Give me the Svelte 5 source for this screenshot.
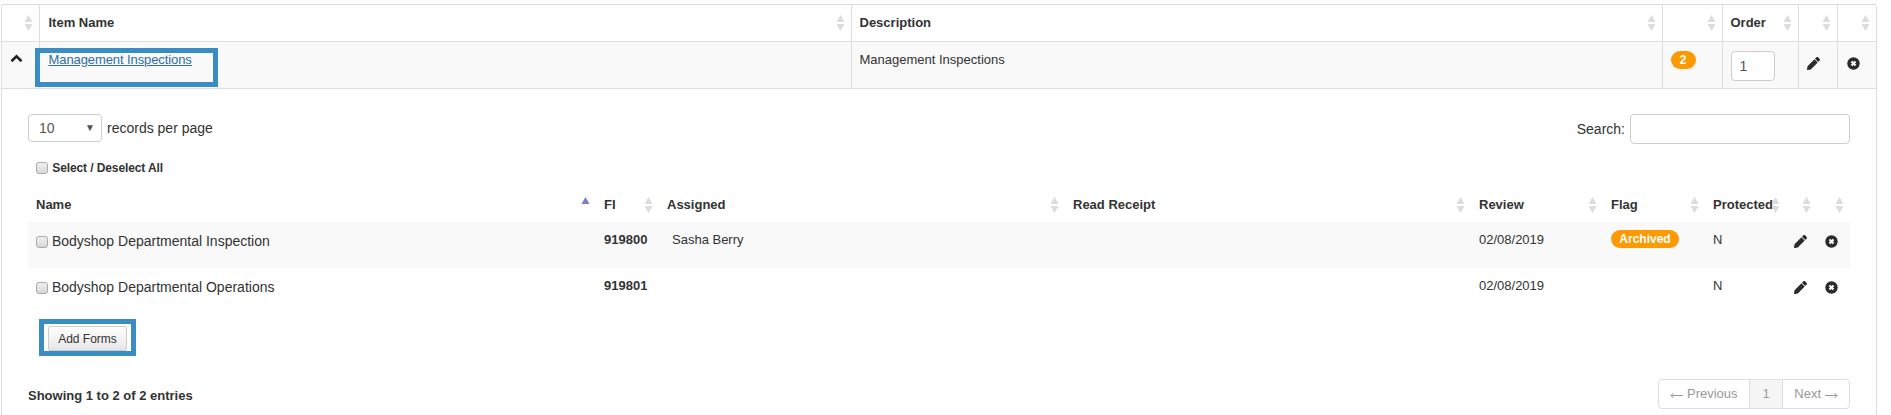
<script>
  const outerCols = [
    { label: '', width: 37 },
    { label: 'Item Name', width: 812 },
    { label: 'Description', width: 811 },
    { label: '', width: 60 },
    { label: 'Order', width: 76 },
    { label: '', width: 39 },
    { label: '', width: 39 }
  ];

  const innerCols = [
    { label: 'Name', width: 568, active: true },
    { label: 'FI', width: 63 },
    { label: 'Assigned', width: 406 },
    { label: 'Read Receipt', width: 406 },
    { label: 'Review', width: 132 },
    { label: 'Flag', width: 102 },
    { label: 'Protected', width: 81 },
    { label: '', width: 31 },
    { label: '', width: 33 }
  ];

  const forms = [
    { name: 'Bodyshop Departmental Inspection', fi: '919800', assigned: 'Sasha Berry', review: '02/08/2019', flag: 'Archived', prot: 'N' },
    { name: 'Bodyshop Departmental Operations', fi: '919801', assigned: '', review: '02/08/2019', flag: '', prot: 'N' }
  ];
</script>

{#snippet sortIcon(active)}
  <svg class="sort" width="9" height="18" viewBox="0 0 9 18">
    <path d="M4.5 1 L8.5 8 L0.5 8 Z" fill={active ? '#7b7bd6' : '#dcdcdc'} />
    {#if !active}
      <path d="M0.5 10 L8.5 10 L4.5 17 Z" fill="#dcdcdc" />
    {/if}
  </svg>
{/snippet}

{#snippet pencil()}
  <svg class="icon" width="13" height="13" viewBox="0 0 512 512">
    <path fill="#2b2b2b" d="M497.9 142.1l-46.1 46.1c-4.7 4.7-12.3 4.7-17 0l-111-111c-4.7-4.7-4.7-12.3 0-17l46.1-46.1c18.7-18.7 49.1-18.7 67.9 0l60.1 60.1c18.8 18.7 18.8 49.1 0 67.9zM284.2 99.8L21.6 362.4.4 483.9c-2.9 16.4 11.4 30.6 27.8 27.8l121.5-21.3 262.6-262.6c4.7-4.7 4.7-12.3 0-17l-111-111c-4.8-4.7-12.4-4.7-17.1 0z" />
  </svg>
{/snippet}

{#snippet removeIcon()}
  <svg class="icon" width="13" height="13" viewBox="0 0 13 13">
    <circle cx="6.5" cy="6.5" r="6.2" fill="#2b2b2b" />
    <path d="M4.5 4.5 L8.5 8.5 M8.5 4.5 L4.5 8.5" stroke="#fff" stroke-width="2.1" />
  </svg>
{/snippet}

{#snippet arrow(d)}
  <svg class="arrow" width="13" height="7" viewBox="0 0 13 7">
    <path {d} fill="none" stroke="#999" stroke-width="1" />
  </svg>
{/snippet}

<div class="panel">
  <table class="outer">
    <colgroup>
      {#each outerCols as col}
        <col style="width:{col.width}px" />
      {/each}
    </colgroup>
    <thead>
      <tr>
        {#each outerCols as col}
          <th>{col.label}{@render sortIcon(false)}</th>
        {/each}
      </tr>
    </thead>
    <tbody>
      <tr>
        <td class="toggle">
          <svg width="13" height="9" viewBox="0 0 13 9">
            <path d="M1.5 7.2 L6.5 2.4 L11.5 7.2" fill="none" stroke="#222" stroke-width="2.6" />
          </svg>
        </td>
        <td class="item">
          <a href="#top">Management Inspections</a>
          <span class="mark"></span>
        </td>
        <td>Management Inspections</td>
        <td><span class="badge count">2</span></td>
        <td><input class="order" value="1" /></td>
        <td class="action">{@render pencil()}</td>
        <td class="action">{@render removeIcon()}</td>
      </tr>
    </tbody>
  </table>

  <div class="detail">
    <div class="tools">
      <div class="length">
        <div class="select"><span>10</span><i>▼</i></div>
        records per page
      </div>
      <label class="search">Search: <input /></label>
    </div>

    <label class="select-all"><input type="checkbox" /> Select / Deselect All</label>

    <table class="inner">
      <colgroup>
        {#each innerCols as col}
          <col style="width:{col.width}px" />
        {/each}
      </colgroup>
      <thead>
        <tr>
          {#each innerCols as col}
            <th>{col.label}{@render sortIcon(col.active)}</th>
          {/each}
        </tr>
      </thead>
      <tbody>
        {#each forms as f}
          <tr>
            <td class="name"><input type="checkbox" /> {f.name}</td>
            <td class="fi">{f.fi}</td>
            <td class="assigned">{f.assigned}</td>
            <td></td>
            <td>{f.review}</td>
            <td>
              {#if f.flag}<span class="badge flag">{f.flag}</span>{/if}
            </td>
            <td>{f.prot}</td>
            <td class="action">{@render pencil()}</td>
            <td class="action">{@render removeIcon()}</td>
          </tr>
        {/each}
      </tbody>
    </table>

    <div class="add-mark"><button>Add Forms</button></div>

    <div class="footer">
      <div class="info">Showing 1 to 2 of 2 entries</div>
      <div class="pager">
        <span class="prev">{@render arrow('M13 3.5 H1 M3.5 1 L1 3.5 L3.5 6')} Previous</span>
        <span class="cur">1</span>
        <span class="next">Next {@render arrow('M0 3.5 H12 M9.5 1 L12 3.5 L9.5 6')}</span>
      </div>
    </div>
  </div>
</div>

<style>
  :global(body) {
    margin: 0;
    background: #fff;
    font-family: "Liberation Sans", Arial, sans-serif;
    font-size: 13px;
    line-height: 20px;
    color: #333;
  }

  .panel {
    box-sizing: border-box;
    width: 1876px;
    height: 411px;
    margin: 4px 0 0 1px;
    border-left: 1px solid #ddd;
    border-right: 1px solid #ddd;
    border-radius: 4px 4px 0 0;
  }

  table {
    table-layout: fixed;
    border-collapse: collapse;
  }

  th {
    position: relative;
    box-sizing: border-box;
    text-align: left;
    font-weight: bold;
    white-space: nowrap;
  }

  .sort {
    position: absolute;
    top: 50%;
    right: 6px;
    margin-top: -9px;
  }

  .outer {
    width: 1874px;
  }

  .outer th {
    height: 37px;
    padding: 0 8px;
    border: 1px solid #ddd;
    border-left-width: 0;
    border-bottom-width: 1px;
  }

  .outer th:nth-child(2) {
    padding-left: 9px;
  }

  .outer th:last-child,
  .outer td:last-child {
    border-right-width: 0;
  }

  .outer td {
    box-sizing: border-box;
    height: 47px;
    padding: 8px 8px 0;
    vertical-align: top;
    background: #f9f9f9;
    border-right: 1px solid #ddd;
    border-bottom: 1px solid #ddd;
  }

  .outer td.toggle {
    padding: 12px 0 0 8px;
    line-height: 0;
  }

  .outer td.item {
    position: relative;
    padding-left: 9px;
  }

  .item a {
    color: #2f6fa6;
    text-decoration: underline;
    letter-spacing: -0.09px;
  }

  .mark {
    position: absolute;
    left: -5px;
    top: 6px;
    box-sizing: border-box;
    width: 183px;
    height: 39px;
    border: 5px solid #3a8dc2;
  }

  .badge {
    display: inline-block;
    background: #ff9900;
    color: #fff;
    font-weight: bold;
    font-size: 12px;
    line-height: 18px;
    border-radius: 9px;
    text-align: center;
  }

  .count {
    width: 25px;
    margin-top: 1px;
  }

  .flag {
    width: 68px;
    vertical-align: top;
  }

  .order {
    box-sizing: border-box;
    display: block;
    width: 44px;
    height: 30px;
    margin: 1px 0 0 0;
    padding: 0 8px;
    border: 1px solid #ccc;
    border-radius: 4px;
    font: 14px "Liberation Sans", Arial, sans-serif;
    color: #555;
  }

  .outer td.action {
    padding: 15px 0 0 8px;
    line-height: 0;
  }

  .outer td.action:last-child {
    padding-left: 9px;
  }

  .detail {
    padding: 25px 26px 0 26px;
  }

  .tools {
    display: flex;
    justify-content: space-between;
    height: 30px;
    align-items: flex-start;
  }

  .length {
    display: flex;
    align-items: center;
    gap: 5px;
    font-size: 14px;
  }

  .select {
    box-sizing: border-box;
    display: flex;
    justify-content: space-between;
    align-items: center;
    width: 74px;
    height: 28px;
    padding: 0 6px 0 10px;
    border: 1px solid #ccc;
    border-radius: 4px;
    color: #555;
  }

  .select i {
    font-style: normal;
    font-size: 10px;
    color: #555;
  }

  .search {
    display: flex;
    align-items: center;
    gap: 5px;
    font-size: 14px;
  }

  .search input {
    box-sizing: border-box;
    width: 220px;
    height: 30px;
    border: 1px solid #ccc;
    border-radius: 4px;
  }

  input[type="checkbox"] {
    appearance: none;
    box-sizing: border-box;
    width: 12px;
    height: 12px;
    margin: 0;
    vertical-align: -2px;
    border: 1px solid #aaa;
    border-radius: 3px;
    background: linear-gradient(#f0f0f0, #d8d8d8);
  }

  .select-all {
    display: block;
    margin: 14px 0 0 8px;
    font-size: 12px;
    font-weight: bold;
    letter-spacing: -0.1px;
  }

  .select-all input {
    margin-right: 1px;
  }

  .inner {
    width: 1822px;
    margin-top: 10px;
  }

  .inner th {
    height: 34px;
    padding: 0 8px;
  }

  .inner td {
    box-sizing: border-box;
    height: 46px;
    padding: 8px;
    vertical-align: top;
  }

  .inner tbody tr:nth-child(odd) td {
    background: #f9f9f9;
  }

  .inner td.name {
    font-size: 14px;
    padding-top: 9px;
  }

  .fi {
    font-weight: bold;
  }

  .inner td.assigned {
    padding-left: 13px;
  }

  .inner td.action {
    padding: 13px 0 0 8px;
    line-height: 0;
  }

  .add-mark {
    box-sizing: border-box;
    width: 97px;
    height: 37px;
    margin: 5px 0 0 11px;
    padding: 2px 4px;
    border: 5px solid #3a8dc2;
  }

  .add-mark button {
    box-sizing: border-box;
    display: block;
    width: 79px;
    height: 25px;
    padding: 0;
    border: 1px solid #ccc;
    border-radius: 2px;
    background: linear-gradient(#fff, #e6e6e6);
    font: 12px "Liberation Sans", Arial, sans-serif;
    color: #333;
  }

  .footer {
    display: flex;
    justify-content: space-between;
    align-items: center;
    margin-top: 23px;
  }

  .info {
    margin-top: 4px;
    font-weight: bold;
    font-size: 13px;
  }

  .pager {
    display: flex;
    height: 30px;
    box-sizing: border-box;
    border: 1px solid #ddd;
    border-radius: 4px;
    line-height: 28px;
    font-size: 13px;
    color: #999;
  }

  .pager span {
    text-align: center;
    white-space: nowrap;
  }

  .arrow {
    vertical-align: -1px;
  }

  .prev {
    width: 90px;
    border-right: 1px solid #ddd;
  }

  .cur {
    width: 32px;
    border-right: 1px solid #ddd;
    background: #f5f5f5;
  }

  .next {
    width: 66px;
  }
</style>
